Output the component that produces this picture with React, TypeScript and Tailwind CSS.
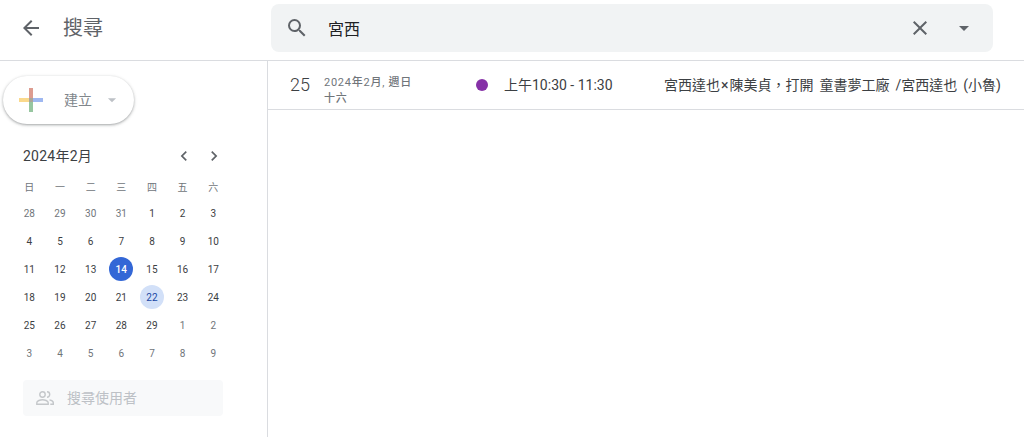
const font = { fontFamily: "Roboto, 'Noto Sans CJK TC', sans-serif" };

const weekdays = ["日", "一", "二", "三", "四", "五", "六"];
const days = [
  28, 29, 30, 31, 1, 2, 3,
  4, 5, 6, 7, 8, 9, 10,
  11, 12, 13, 14, 15, 16, 17,
  18, 19, 20, 21, 22, 23, 24,
  25, 26, 27, 28, 29, 1, 2,
  3, 4, 5, 6, 7, 8, 9,
];

function dayClass(index: number) {
  if (index === 17) return "bg-[#3367d6] font-medium text-white";
  if (index === 25) return "bg-[#d2e0f8] text-[#1a47a3]";
  if (index < 4 || index > 32) return "text-[#70757a]";
  return "text-[#3c4043]";
}

function Header() {
  return (
    <header className="flex h-[61px] shrink-0 items-center border-b border-[#dadce0] pb-1">
      <div className="flex w-[271px] shrink-0 items-center pl-[19px]">
        <svg width="24" height="24" viewBox="0 0 24 24" fill="#5f6368">
          <path d="M20 11H7.83l5.59-5.59L12 4l-8 8 8 8 1.41-1.41L7.83 13H20v-2z" />
        </svg>
        <h1 className="ml-5 text-[20px] leading-7 text-[#5f6368]">搜尋</h1>
      </div>
      <div className="flex h-12 w-[722px] items-center rounded-lg bg-[#f1f3f4] pl-[14px] pr-[17px]">
        <svg width="24" height="24" viewBox="0 0 24 24" fill="#5f6368">
          <path d="M15.5 14h-.79l-.28-.27A6.47 6.47 0 0 0 16 9.5 6.5 6.5 0 1 0 9.5 16c1.61 0 3.09-.59 4.23-1.57l.27.28v.79l5 4.99L20.49 19l-4.99-5zm-6 0C7.01 14 5 11.99 5 9.5S7.01 5 9.5 5 14 7.01 14 9.5 11.99 14 9.5 14z" />
        </svg>
        <span className="ml-[19px] flex-1 pt-1 text-base text-[#202124]">宮西</span>
        <svg width="24" height="24" viewBox="0 0 24 24" fill="#5f6368">
          <path d="M19 6.41 17.59 5 12 10.59 6.41 5 5 6.41 10.59 12 5 17.59 6.41 19 12 13.41 17.59 19 19 17.59 13.41 12z" />
        </svg>
        <svg className="ml-5" width="24" height="24" viewBox="0 0 24 24" fill="#5f6368">
          <path d="M7 10l5 5 5-5z" />
        </svg>
      </div>
    </header>
  );
}

function CreateButton() {
  return (
    <button className="ml-[3px] mt-[15px] flex h-12 w-[131px] items-center rounded-full bg-white pl-4 shadow-[0_1px_2px_0_rgba(60,64,67,0.3),0_1px_3px_1px_rgba(60,64,67,0.15)]">
      <svg width="24" height="24" viewBox="0 0 24 24">
        <rect x="10" y="0" width="4" height="10" fill="#dd9c90" />
        <rect x="14" y="10" width="10" height="4" fill="#9fb8f1" />
        <rect x="10" y="14" width="4" height="10" fill="#97c6a0" />
        <rect x="0" y="10" width="10" height="4" fill="#fad98c" />
        <rect x="10" y="10" width="4" height="4" fill="#a9a59a" />
      </svg>
      <span className="ml-[21px] text-sm text-[#80868b]">建立</span>
      <svg className="ml-[13px]" width="14" height="14" viewBox="0 0 24 24" fill="#bdc1c6">
        <path d="M5 9l7 7 7-7z" />
      </svg>
    </button>
  );
}

function MiniCalendar() {
  return (
    <section className="ml-[14px] mt-[18px] w-[216px]">
      <div className="flex h-7 items-center justify-between pl-[9px] pr-[6px]">
        <span className="text-sm tracking-[0.25px] text-[#3c4043]">2024年2月</span>
        <div className="flex items-center gap-[10px]">
          <svg width="20" height="20" viewBox="0 0 24 24" fill="#5f6368">
            <path d="M15.41 7.41 14 6l-6 6 6 6 1.41-1.41L10.83 12z" />
          </svg>
          <svg width="20" height="20" viewBox="0 0 24 24" fill="#5f6368">
            <path d="M8.59 16.59 10 18l6-6-6-6-1.41 1.41L13.17 12z" />
          </svg>
        </div>
      </div>
      <div className="mt-[7px] grid grid-cols-[repeat(7,30.67px)] text-center">
        {weekdays.map((day) => (
          <div key={day} className="flex h-[20px] items-center justify-center text-[10px] text-[#70757a]">
            {day}
          </div>
        ))}
      </div>
      <div className="mt-[2px] grid grid-cols-[repeat(7,30.67px)] auto-rows-[28px] text-center">
        {days.map((day, i) => (
          <div key={i} className="flex items-center justify-center">
            <span className={`flex h-6 w-6 items-center justify-center rounded-full text-[10px] font-[450] ${dayClass(i)}`}>
              {day}
            </span>
          </div>
        ))}
      </div>
    </section>
  );
}

function PeopleSearch() {
  return (
    <div className="ml-[23px] mt-[13px] flex h-9 w-[200px] items-center rounded bg-[#f8f9fa] pl-[13px]">
      <svg width="18" height="14" viewBox="0 0 18 14" fill="none" stroke="#c4c7ca" strokeWidth="1.4">
        <circle cx="6.5" cy="3.5" r="2.7" />
        <path d="M.8 13.2v-1.4c0-2 3.6-3.1 5.7-3.1s5.7 1.100 5.700 3.100v1.400z" />
        <path d="M11 .8a2.700 2.700 0 0 1 0 5.400" />
        <path d="M13.500 8.900c2 .4 3.800 1.400 3.800 2.900v1.400h-3" />
      </svg>
      <span className="ml-[13px] text-sm text-[#bdc1c6]">搜尋使用者</span>
    </div>
  );
}

function ResultRow() {
  return (
    <div className="flex h-[49px] items-center border-b border-[#dadce0] text-[#3c4043]">
      <span className="ml-[22px] w-[34px] text-[18px] font-[350] leading-6">25</span>
      <span className="mt-3 w-[92px] text-[11px] font-[450] leading-4 tracking-[0.75px] text-[#70757a]">
        2024年2月, 週日十六
      </span>
      <span className="ml-[60px] h-3 w-3 rounded-full bg-[#8631a7]" />
      <span className="ml-[16px] w-[160px] text-sm">上午10:30 - 11:30</span>
      <span className="whitespace-nowrap text-sm [word-spacing:2.5px]">
        宮西達也<span className="px-px">×</span>陳美貞，打開 童書夢工廠 /宮西達也 (小魯)
      </span>
    </div>
  );
}

export default function App() {
  return (
    <div style={font} className="flex h-[437px] w-[1024px] flex-col overflow-hidden bg-white">
      <Header />
      <div className="flex min-h-0 flex-1">
        <aside className="w-[268px] shrink-0 border-r border-[#dadce0]">
          <CreateButton />
          <MiniCalendar />
          <PeopleSearch />
        </aside>
        <main className="min-w-0 flex-1">
          <ResultRow />
        </main>
      </div>
    </div>
  );
}
